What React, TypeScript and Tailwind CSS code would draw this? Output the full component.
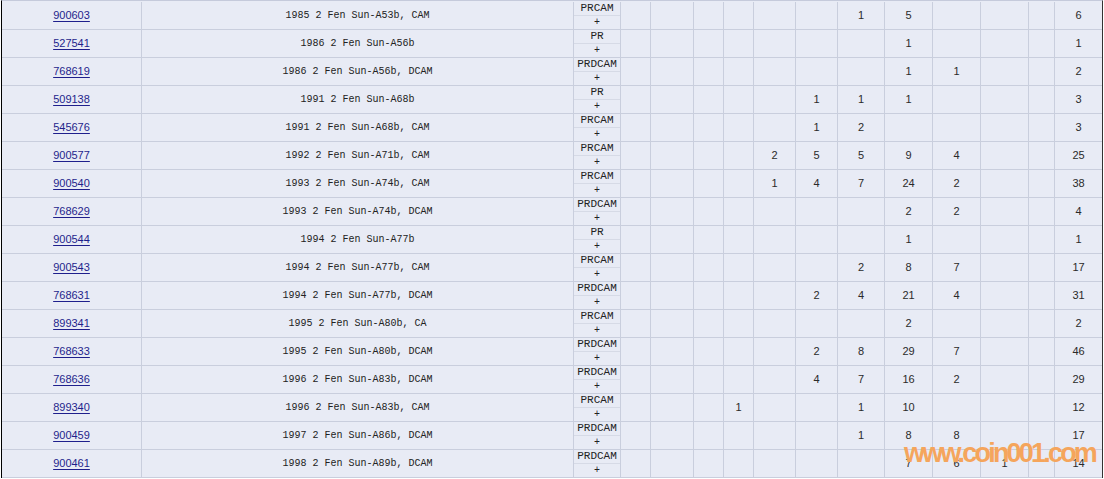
import React from "react";

type Row = {
  id: string;
  desc: string;
  pr: string;
  c: Record<number, string>;
  t: string;
};

const rows: Row[] = [
  { id: "900603", desc: "1985 2 Fen Sun-A53b, CAM", pr: "PRCAM", c: { 10: "1", 11: "5" }, t: "6" },
  { id: "527541", desc: "1986 2 Fen Sun-A56b", pr: "PR", c: { 11: "1" }, t: "1" },
  { id: "768619", desc: "1986 2 Fen Sun-A56b, DCAM", pr: "PRDCAM", c: { 11: "1", 12: "1" }, t: "2" },
  { id: "509138", desc: "1991 2 Fen Sun-A68b", pr: "PR", c: { 9: "1", 10: "1", 11: "1" }, t: "3" },
  { id: "545676", desc: "1991 2 Fen Sun-A68b, CAM", pr: "PRCAM", c: { 9: "1", 10: "2" }, t: "3" },
  { id: "900577", desc: "1992 2 Fen Sun-A71b, CAM", pr: "PRCAM", c: { 8: "2", 9: "5", 10: "5", 11: "9", 12: "4" }, t: "25" },
  { id: "900540", desc: "1993 2 Fen Sun-A74b, CAM", pr: "PRCAM", c: { 8: "1", 9: "4", 10: "7", 11: "24", 12: "2" }, t: "38" },
  { id: "768629", desc: "1993 2 Fen Sun-A74b, DCAM", pr: "PRDCAM", c: { 11: "2", 12: "2" }, t: "4" },
  { id: "900544", desc: "1994 2 Fen Sun-A77b", pr: "PR", c: { 11: "1" }, t: "1" },
  { id: "900543", desc: "1994 2 Fen Sun-A77b, CAM", pr: "PRCAM", c: { 10: "2", 11: "8", 12: "7" }, t: "17" },
  { id: "768631", desc: "1994 2 Fen Sun-A77b, DCAM", pr: "PRDCAM", c: { 9: "2", 10: "4", 11: "21", 12: "4" }, t: "31" },
  { id: "899341", desc: "1995 2 Fen Sun-A80b, CA", pr: "PRCAM", c: { 11: "2" }, t: "2" },
  { id: "768633", desc: "1995 2 Fen Sun-A80b, DCAM", pr: "PRDCAM", c: { 9: "2", 10: "8", 11: "29", 12: "7" }, t: "46" },
  { id: "768636", desc: "1996 2 Fen Sun-A83b, DCAM", pr: "PRDCAM", c: { 9: "4", 10: "7", 11: "16", 12: "2" }, t: "29" },
  { id: "899340", desc: "1996 2 Fen Sun-A83b, CAM", pr: "PRCAM", c: { 7: "1", 10: "1", 11: "10" }, t: "12" },
  { id: "900459", desc: "1997 2 Fen Sun-A86b, DCAM", pr: "PRDCAM", c: { 10: "1", 11: "8", 12: "8" }, t: "17" },
  { id: "900461", desc: "1998 2 Fen Sun-A89b, DCAM", pr: "PRDCAM", c: { 11: "7", 12: "6", 13: "1" }, t: "14" },
];

const countCols = [4, 5, 6, 7, 8, 9, 10, 11, 12, 13, 14];

export default function App() {
  return (
    <div className="relative w-[1104px] h-[479px] overflow-hidden bg-white">
      <div className="ml-[1px] w-[1102px] border-l border-r border-l-black border-r-[#333] border-t border-t-[#c5cadb] bg-[#e8ebf5]">
        <div className="h-[1px]" />
        {rows.map((r) => (
          <div
            key={r.id}
            className="grid h-[28px] grid-cols-[140px_432px_47px_30px_43px_30px_30px_42px_42px_47px_48px_48px_48px_26px_47px] border-b border-[#c9cedd] font-['Liberation_Sans',Arial,sans-serif] text-[11px] text-[#2a2a2a]"
          >
            <div className="flex items-center justify-center border-r border-[#c9cedd]">
              <a href="#" className="text-[#1f1f8c] underline underline-offset-2">
                {r.id}
              </a>
            </div>
            <div className="flex items-center justify-center border-r border-[#c9cedd] font-['Liberation_Mono',monospace] text-[10px] text-[#222]">
              {r.desc}
            </div>
            <div className="flex flex-col border-r border-[#c9cedd] font-['Liberation_Mono',monospace] text-[11px] text-[#222]">
              <div className="flex h-[14px] items-center justify-center border-b border-[#d6dae6] leading-none">
                {r.pr}
              </div>
              <div className="flex flex-1 items-center justify-center text-[10px] leading-none">+</div>
            </div>
            {countCols.map((col) => (
              <div key={col} className="flex items-center justify-center border-r border-[#c9cedd]">
                {r.c[col] ?? ""}
              </div>
            ))}
            <div className="flex items-center justify-center">{r.t}</div>
          </div>
        ))}
      </div>
      <div className="pointer-events-none absolute left-[904px] top-[440px] font-['Liberation_Sans',Arial,sans-serif] text-[27px] font-bold leading-[27px] tracking-[-2.8px] text-[#f5a55c]">
        www.coin001.com
      </div>
    </div>
  );
}
